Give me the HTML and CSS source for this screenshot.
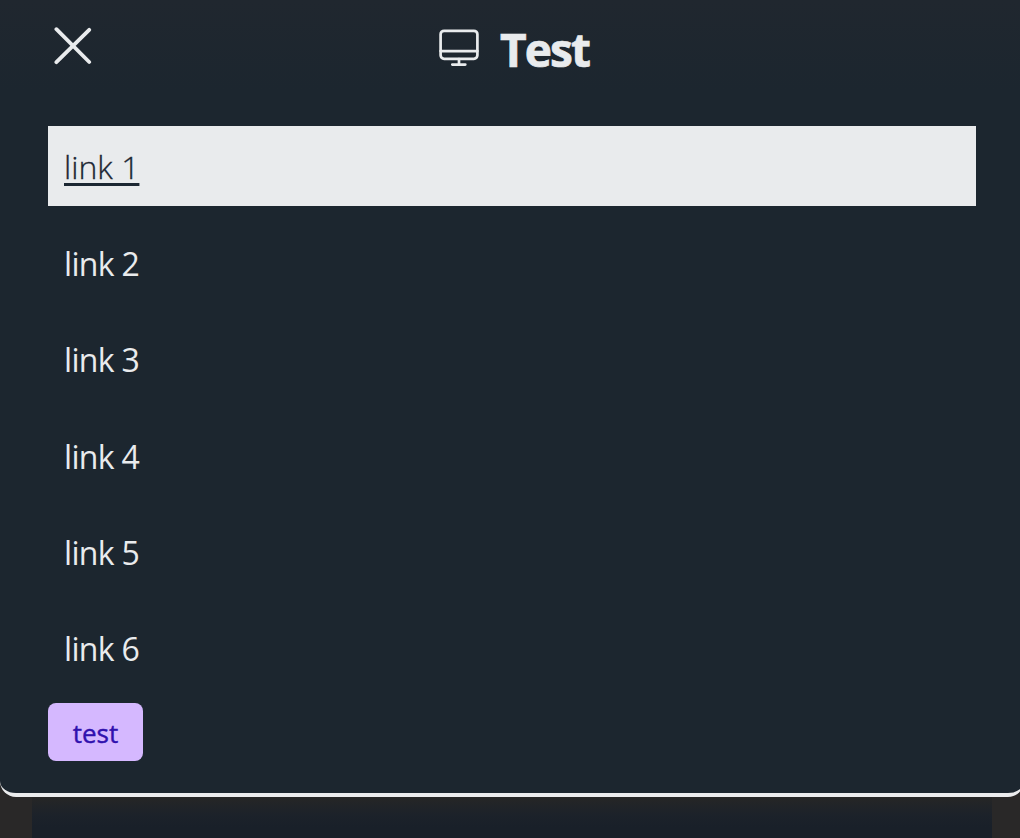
FILE: index.html
```html
<!DOCTYPE html>
<html lang="en">
<head>
<meta charset="utf-8">
<title>Test</title>
<link rel="stylesheet" href="styles.css">
</head>
<body>
<div class="page">
  <nav class="panel">
    <header class="header">
      <button class="close" aria-label="Close">
        <svg width="38" height="38" viewBox="0 0 38 38" fill="none" stroke="currentColor" stroke-width="3.8" stroke-linecap="round"><path d="M2.4 2.2 35.2 35M35.2 2.8 2.4 35.2"/></svg>
      </button>
      <h1 class="title">
        <svg class="monitor" width="40" height="38" viewBox="0 0 40 38" fill="none" stroke="currentColor" stroke-width="2.7" stroke-linecap="round"><rect x="1.6" y="1.8" width="36.8" height="28" rx="3.5"/><path d="M1.6 22.1h36.8M20 30v5.4M13.3 35.6h13"/></svg>
        <span class="title-text">Test</span>
      </h1>
    </header>
    <ul class="links">
      <li><a class="link active">link 1</a></li>
      <li><a class="link">link 2</a></li>
      <li><a class="link">link 3</a></li>
      <li><a class="link">link 4</a></li>
      <li><a class="link">link 5</a></li>
      <li><a class="link">link 6</a></li>
    </ul>
    <button class="button">test</button>
  </nav>
  <main class="content"></main>
</div>
</body>
</html>
```
FILE: styles.css
```css
* { box-sizing: border-box; }
html { overflow: hidden; }
body {
  margin: 0;
  overflow: hidden;
  background: #292828;
  color: #e9ebed;
  font-family: "Segoe UI", "Open Sans", "Noto Sans", sans-serif;
}
.page { width: 1024px; height: 838px; overflow: hidden; }
.panel {
  height: 797px;
  padding: 0 48px;
  border-bottom: 4px solid #ebecee;
  border-radius: 0 0 16px 16px;
  background: linear-gradient(#20272f 0, #1c262f 90px, #1c262f 100%);
}
.header { position: relative; height: 126px; display: flex; justify-content: center; }
.close {
  position: absolute;
  left: 6px;
  top: 27px;
  padding: 0;
  border: 0;
  background: none;
  color: inherit;
  line-height: 0;
}
.title {
  display: flex;
  align-items: flex-start;
  gap: 21px;
  margin: 0;
  padding: 29px 0 0 4px;
  font-size: 46px;
  font-weight: 700;
  line-height: 40px;
}
.title-text { width: 89px; letter-spacing: -1.9px; -webkit-text-stroke: 0.7px currentColor; }
.links {
  list-style: none;
  margin: 0;
  padding: 0;
  display: grid;
  gap: 16.2px;
}
.link {
  display: block;
  height: 80px;
  padding: 0 16px;
  font-size: 32px;
  line-height: 83px;
  letter-spacing: -0.7px;
}
.active {
  background: #e9ebed;
  color: #1c2733;
  font-weight: 300;
  line-height: 81px;
  letter-spacing: 0;
  -webkit-text-stroke: 0.3px currentColor;
  text-decoration: underline;
  text-decoration-thickness: 3px;
  text-underline-offset: 4px;
}
.button {
  display: block;
  width: 95px;
  height: 58px;
  margin-top: 16px;
  padding: 3px 0 0;
  border: 0;
  border-radius: 8px;
  background: #d5b8ff;
  color: #3011ae;
  font: 500 26px/55px "Segoe UI", "Open Sans", "Noto Sans", sans-serif;
  -webkit-text-stroke: 0.4px currentColor;
}
.content {
  height: 41px;
  margin: 0 32px;
  background: linear-gradient(#262626 0, #1c222a 18px, #192029 30px);
}
```
